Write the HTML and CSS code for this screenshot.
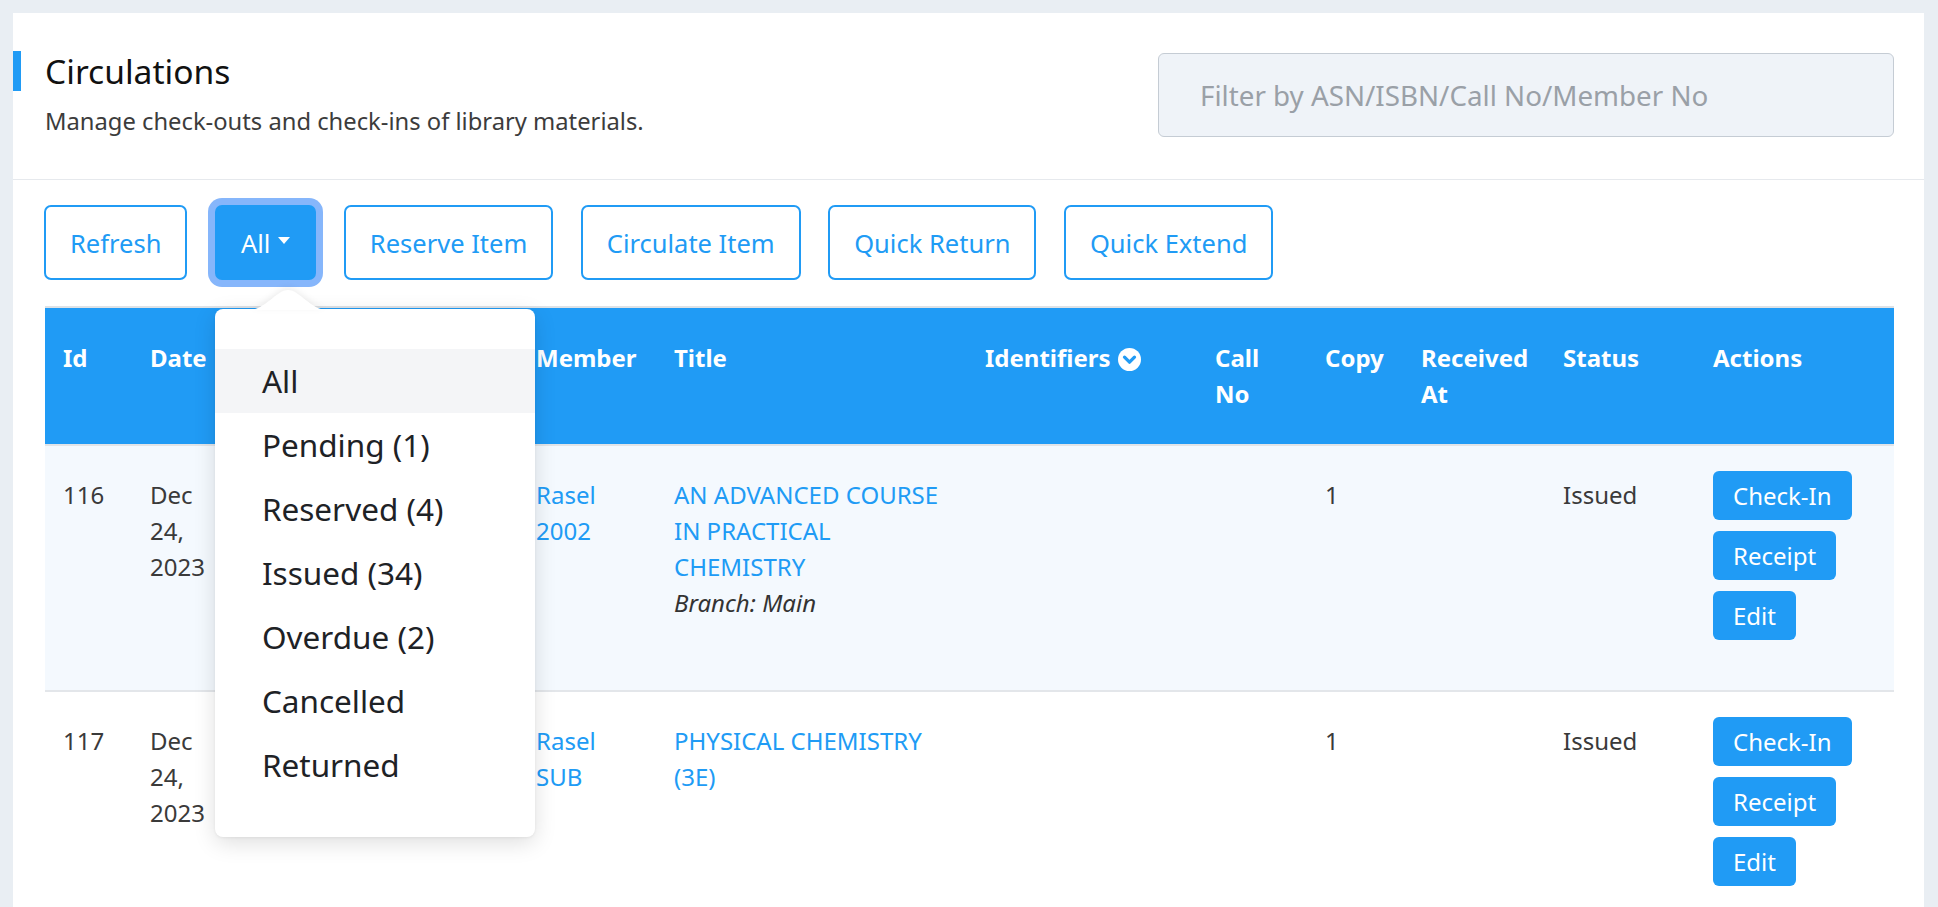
FILE: index.html
```html
<!DOCTYPE html>
<html lang="en">
<head>
<meta charset="utf-8">
<title>Circulations</title>
<link rel="stylesheet" href="styles.css">
</head>
<body>
<div class="card">
  <div class="card-header">
    <div class="heading">
      <h1 class="title">Circulations</h1>
      <p class="subtitle">Manage check-outs and check-ins of library materials.</p>
    </div>
    <input class="search" type="text" placeholder="Filter by ASN/ISBN/Call No/Member No">
  </div>
  <div class="card-body">
    <div class="toolbar">
      <button class="btn btn-outline">Refresh</button>
      <div class="dropdown-wrap">
        <button class="btn btn-solid btn-focus">All<span class="caret"></span></button>
        <div class="dropdown">
          <svg class="dd-arrow" width="80" height="21" viewBox="0 0 80 21"><path d="M0 21 C18 21 28 1 40 1 C52 1 62 21 80 21 Z" fill="#fff"/></svg>
          <ul class="dd-list">
            <li class="dd-item active">All</li>
            <li class="dd-item">Pending (1)</li>
            <li class="dd-item">Reserved (4)</li>
            <li class="dd-item">Issued (34)</li>
            <li class="dd-item">Overdue (2)</li>
            <li class="dd-item">Cancelled</li>
            <li class="dd-item">Returned</li>
          </ul>
        </div>
      </div>
      <button class="btn btn-outline">Reserve Item</button>
      <button class="btn btn-outline">Circulate Item</button>
      <button class="btn btn-outline">Quick Return</button>
      <button class="btn btn-outline">Quick Extend</button>
    </div>

    <table class="table">
      <colgroup>
        <col class="c-id"><col class="c-date"><col class="c-due"><col class="c-member"><col class="c-title"><col class="c-ident"><col class="c-call"><col class="c-copy"><col class="c-recv"><col class="c-status"><col class="c-actions">
      </colgroup>
      <thead>
        <tr>
          <th>Id</th>
          <th>Date</th>
          <th>Due Date</th>
          <th>Member</th>
          <th>Title</th>
          <th>Identifiers <svg class="ident-icon" width="23" height="23" viewBox="0 0 24 24"><circle cx="12" cy="12" r="12" fill="#fff"/><path d="M6.8 9.6 L12 14.8 L17.2 9.6" fill="none" stroke="#209bf5" stroke-width="3.4" stroke-linecap="round" stroke-linejoin="round"/></svg></th>
          <th>Call No</th>
          <th>Copy</th>
          <th>Received At</th>
          <th>Status</th>
          <th>Actions</th>
        </tr>
      </thead>
      <tbody>
        <tr class="striped">
          <td>116</td>
          <td>Dec 24, 2023</td>
          <td>Dec 31, 2023</td>
          <td><a class="link">Rasel 2002</a></td>
          <td><a class="link">AN ADVANCED COURSE IN PRACTICAL CHEMISTRY</a><div class="branch">Branch: Main</div></td>
          <td></td>
          <td></td>
          <td>1</td>
          <td></td>
          <td>Issued</td>
          <td class="actions"><div class="action-stack"><button class="btn-sm">Check-In</button><button class="btn-sm">Receipt</button><button class="btn-sm">Edit</button></div></td>
        </tr>
        <tr>
          <td>117</td>
          <td>Dec 24, 2023</td>
          <td>Dec 31, 2023</td>
          <td><a class="link">Rasel SUB</a></td>
          <td><a class="link">PHYSICAL CHEMISTRY (3E)</a></td>
          <td></td>
          <td></td>
          <td>1</td>
          <td></td>
          <td>Issued</td>
          <td class="actions"><div class="action-stack"><button class="btn-sm">Check-In</button><button class="btn-sm">Receipt</button><button class="btn-sm">Edit</button></div></td>
        </tr>
      </tbody>
    </table>
  </div>
</div>
</body>
</html>
```

FILE: styles.css
```css
html, body {
  margin: 0;
  padding: 0;
}
body {
  background: #e9eef3;
  padding: 13px 14px 0 13px;
  font-family: "Noto Sans", "Open Sans", sans-serif;
  color: #3a3a3a;
  overflow: hidden;
  height: 907px;
  box-sizing: border-box;
}
.card {
  background: #fff;
  min-height: 1000px;
}
.card-header {
  display: flex;
  justify-content: space-between;
  align-items: flex-start;
  padding: 40px 30px 40px 32px;
  border-bottom: 1px solid #e6e9ed;
}
.title {
  margin: 0 0 0 -32px;
  padding-left: 24px;
  border-left: 8px solid #209bf5;
  font-size: 33.6px;
  line-height: 40px;
  font-weight: 400;
  color: #111;
  position: relative;
  top: -2px;
}
.subtitle {
  margin: 10px 0 0;
  font-size: 23.75px;
  line-height: 36px;
  color: #3c3c3c;
}
.search {
  width: 736px;
  height: 84px;
  box-sizing: border-box;
  border: 1px solid #c5ccd4;
  border-radius: 6px;
  background: #eff3f8;
  padding: 0 0 0 41px;
  font-family: "Noto Sans", "Open Sans", sans-serif;
  font-size: 27.75px;
  color: #333;
  outline: none;
}
.search::placeholder {
  color: #9aa0a7;
}
.card-body {
  padding: 25px 30px 0 32px;
}
.toolbar {
  display: flex;
  gap: 27.5px;
  align-items: center;
  margin-left: -1px;
}
.btn {
  height: 75px;
  box-sizing: border-box;
  border-radius: 7px;
  font-family: "Noto Sans", "Open Sans", sans-serif;
  font-size: 25.5px;
  line-height: 38px;
  padding: 0 24px;
  display: inline-flex;
  align-items: center;
  cursor: pointer;
}
.btn-outline {
  background: #fff;
  border: 2px solid #209bf5;
  color: #209bf5;
}
.btn-solid {
  background: #209bf5;
  border: 2px solid #209bf5;
  color: #fff;
}
.btn-focus {
  box-shadow: 0 0 0 7px #86b6fb;
  border-radius: 7px;
}
.caret {
  display: inline-block;
  width: 0;
  height: 0;
  margin-left: 8px;
  border-left: 6.5px solid transparent;
  border-right: 6.5px solid transparent;
  border-top: 7px solid #fff;
  position: relative;
  top: -2px;
}
.dropdown-wrap {
  position: relative;
}
.dropdown {
  position: absolute;
  left: 0;
  top: 104px;
  width: 320px;
  background: #fff;
  border-radius: 8px;
  box-shadow: 0 6px 22px rgba(0, 0, 0, 0.13), 0 1px 3px rgba(0, 0, 0, 0.06);
  z-index: 10;
}
.dd-arrow {
  position: absolute;
  left: 33px;
  top: -20px;
  filter: drop-shadow(0 -2px 3px rgba(0, 0, 0, 0.07));
}
.dd-list {
  list-style: none;
  margin: 0;
  padding: 40px 0 40px;
  position: relative;
}
.dd-item {
  height: 64px;
  line-height: 64px;
  padding: 0 47px;
  font-size: 31.5px;
  color: #1e2226;
}
.dd-item.active {
  background: #f4f5f7;
}
.table {
  margin-top: 26px;
  width: 100%;
  table-layout: fixed;
  border-collapse: collapse;
  font-size: 24px;
  line-height: 36px;
}
.c-id { width: 87px; }
.c-date { width: 100px; }
.c-due { width: 286px; }
.c-member { width: 138px; }
.c-title { width: 311px; }
.c-ident { width: 230px; }
.c-call { width: 110px; }
.c-copy { width: 96px; }
.c-recv { width: 142px; }
.c-status { width: 150px; }
.c-actions { width: 199px; }
thead tr {
  background: #209bf5;
  border-top: 2px solid #dee2e6;
  border-bottom: 2px solid #e1e4e8;
}
th {
  text-align: left;
  vertical-align: top;
  color: #fff;
  font-weight: 700;
  padding: 32px 18px;
}
.ident-icon {
  vertical-align: -4px;
  margin-left: 1px;
}
tbody tr {
  border-bottom: 2px solid #e3e6ea;
}
tbody tr.striped {
  background: #f4f9fe;
}
td {
  vertical-align: top;
  padding: 31px 18px;
  color: #3a3a3a;
}
.link {
  color: #209bf5;
  text-decoration: none;
}
.branch {
  font-style: italic;
  color: #333;
}
td.actions {
  padding: 25px 18px 50px;
}
.action-stack {
  display: flex;
  flex-direction: column;
  align-items: flex-start;
  gap: 11px;
}
.btn-sm {
  background: #209bf5;
  border: 0;
  border-radius: 6px;
  color: #fff;
  font-family: "Noto Sans", "Open Sans", sans-serif;
  font-size: 24px;
  line-height: 37px;
  padding: 6px 20px;
  cursor: pointer;
}
```
